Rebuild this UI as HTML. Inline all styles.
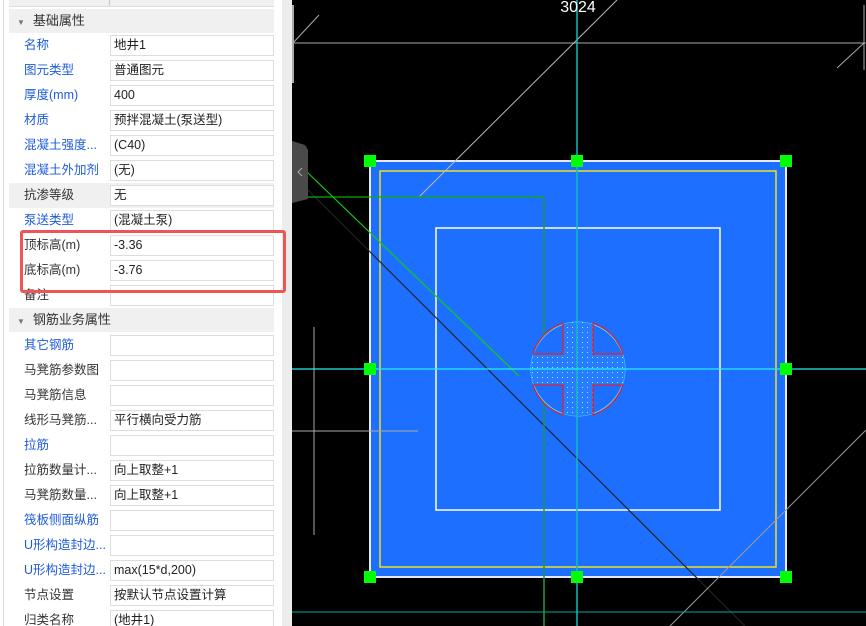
<!DOCTYPE html>
<html><head><meta charset="utf-8"><style>
html,body{margin:0;width:866px;height:626px;overflow:hidden}
body{background:#000;font-family:"Liberation Sans","Noto Sans CJK SC",sans-serif;font-size:12px;position:relative}
#p{position:absolute;left:0;top:0;width:282px;height:626px;background:#fff}
#strip{position:absolute;left:282px;top:0;width:10px;height:626px;background:#ececec}
.lb{position:absolute;left:3px;top:0;width:1px;height:626px;background:#ddd}
.hd{position:absolute;left:9px;width:265px;height:24px;background:#f0f0f0;color:#333;font-size:13px;line-height:24px}
.hd span{font-size:8px;color:#777;margin:0 8px 0 8px}
.r{position:absolute;left:9px;width:265px;height:25px}
.r .l{position:absolute;left:15px;top:0;line-height:25px;color:#333;font-size:12.5px;white-space:nowrap}
.r .l.b{color:#1e5bdc}
.r .v{position:absolute;left:101px;top:2px;border:1px solid #ddd;line-height:19px;padding-left:3px;box-sizing:border-box;width:164px;height:21px;color:#222;font-size:12.5px}
.g{background:#f0f0f0}
#red{position:absolute;left:20px;top:230px;width:260px;height:57px;border:3px solid #f05454;border-radius:3px}
</style></head><body>
<div id="p">
<div class="lb"></div>
<div style="position:absolute;left:9px;top:0;width:265px;height:6px;background:#f0f0f0;border-bottom:1px solid #ddd"></div>
<div style="position:absolute;left:109px;top:0;width:1px;height:6px;background:#ccc"></div>
<div class="hd" style="top:9px"><span>▼</span>基础属性</div>
<div class="r" style="top:33px"><div class="l b">名称</div><div class="v">地井1</div></div>
<div class="r" style="top:58px"><div class="l b">图元类型</div><div class="v">普通图元</div></div>
<div class="r" style="top:83px"><div class="l b">厚度(mm)</div><div class="v">400</div></div>
<div class="r" style="top:108px"><div class="l b">材质</div><div class="v">预拌混凝土(泵送型)</div></div>
<div class="r" style="top:133px"><div class="l b">混凝土强度...</div><div class="v">(C40)</div></div>
<div class="r" style="top:158px"><div class="l b">混凝土外加剂</div><div class="v">(无)</div></div>
<div class="r g" style="top:183px"><div class="l">抗渗等级</div><div class="v" style="background:#fff">无</div></div>
<div class="r" style="top:208px"><div class="l b">泵送类型</div><div class="v">(混凝土泵)</div></div>
<div class="r" style="top:233px"><div class="l">顶标高(m)</div><div class="v">-3.36</div></div>
<div class="r" style="top:258px"><div class="l">底标高(m)</div><div class="v">-3.76</div></div>
<div class="r" style="top:283px"><div class="l">备注</div><div class="v"></div></div>
<div class="hd" style="top:308px"><span>▼</span>钢筋业务属性</div>
<div class="r" style="top:333px"><div class="l b">其它钢筋</div><div class="v"></div></div>
<div class="r" style="top:358px"><div class="l">马凳筋参数图</div><div class="v"></div></div>
<div class="r" style="top:383px"><div class="l">马凳筋信息</div><div class="v"></div></div>
<div class="r" style="top:408px"><div class="l">线形马凳筋...</div><div class="v">平行横向受力筋</div></div>
<div class="r" style="top:433px"><div class="l b">拉筋</div><div class="v"></div></div>
<div class="r" style="top:458px"><div class="l">拉筋数量计...</div><div class="v">向上取整+1</div></div>
<div class="r" style="top:483px"><div class="l">马凳筋数量...</div><div class="v">向上取整+1</div></div>
<div class="r" style="top:508px"><div class="l b">筏板侧面纵筋</div><div class="v"></div></div>
<div class="r" style="top:533px"><div class="l b">U形构造封边...</div><div class="v"></div></div>
<div class="r" style="top:558px"><div class="l b">U形构造封边...</div><div class="v">max(15*d,200)</div></div>
<div class="r" style="top:583px"><div class="l">节点设置</div><div class="v">按默认节点设置计算</div></div>
<div class="r" style="top:608px"><div class="l">归类名称</div><div class="v">(地井1)</div></div>
</div>
<div id="strip"></div>
<div id="red"></div>
<svg style="position:absolute;left:0;top:0" width="866" height="626">
<rect x="370" y="161" width="416" height="416" fill="#1c6fff" stroke="#e8e8ff" stroke-width="2"/>
<rect x="380" y="171" width="396" height="396" fill="none" stroke="#f0e020" stroke-width="1.5"/>
<rect x="436" y="228" width="284" height="282" fill="none" stroke="#fff" stroke-width="1.5"/>
<line x1="293" y1="43" x2="866" y2="43" stroke="#aaa"/>
<line x1="293" y1="5" x2="293" y2="83" stroke="#aaa" stroke-width="2"/>
<line x1="864" y1="5" x2="864" y2="70" stroke="#aaa"/>
<line x1="293" y1="43" x2="319" y2="15" stroke="#aaa"/>
<line x1="864" y1="43" x2="837" y2="68" stroke="#aaa"/>
<line x1="617" y1="0" x2="420" y2="196" stroke="#bbb"/>
<line x1="303" y1="185" x2="745" y2="626" stroke="#222" stroke-width="1.2"/>
<line x1="866" y1="430" x2="670" y2="626" stroke="#999"/>
<line x1="314" y1="327" x2="314" y2="535" stroke="#aaa"/>
<line x1="292" y1="431" x2="418" y2="431" stroke="#aaa"/>
<line x1="292" y1="612" x2="866" y2="612" stroke="#0aa" />
<line x1="305" y1="197" x2="544" y2="197" stroke="#1a1" stroke-width="1.2"/>
<line x1="544" y1="197" x2="544" y2="626" stroke="#1a9a40" stroke-width="1.5"/>
<line x1="307" y1="172" x2="519" y2="376" stroke="#1c1" stroke-width="1.2"/>
<defs><pattern id="dt" width="5" height="5" patternUnits="userSpaceOnUse"><rect width="5" height="5" fill="#2a7cff"/><rect x="2" y="2" width="1" height="1" fill="#7ff"/></pattern>
<clipPath id="c"><circle cx="578" cy="369" r="47"/></clipPath></defs>
<circle cx="578" cy="369" r="47" fill="#1c6fff" stroke="#40e0ff"/>
<g clip-path="url(#c)"><rect x="563" y="320" width="30" height="100" fill="url(#dt)"/><rect x="528" y="354" width="100" height="31" fill="url(#dt)"/></g>
<path d="M563 323 L563 354 L533 354 M593 323 L593 354 L623 354 M563 415 L563 385 L533 385 M593 415 L593 385 L623 385" fill="none" stroke="#e02030" stroke-width="1.3"/>
<path d="M533 354 A47 47 0 0 1 563 323 M593 323 A47 47 0 0 1 623 354 M623 385 A47 47 0 0 1 593 415 M563 415 A47 47 0 0 1 533 385" fill="none" stroke="#e02030" stroke-width="1.3"/>
<line x1="577" y1="0" x2="577" y2="626" stroke="#1bb" stroke-width="1.5"/>
<line x1="292" y1="369" x2="866" y2="369" stroke="#2ee" stroke-width="1.2"/>
<g fill="#00ff00">
<rect x="364" y="155" width="12" height="12"/><rect x="571" y="155" width="12" height="12"/><rect x="780" y="155" width="12" height="12"/>
<rect x="364" y="363" width="12" height="12"/><rect x="780" y="363" width="12" height="12"/>
<rect x="364" y="571" width="12" height="12"/><rect x="571" y="571" width="12" height="12"/><rect x="780" y="571" width="12" height="12"/>
</g>
<path d="M292 141 L305 145 L308 150 L308 199 L292 203 Z" fill="#4a4a4a"/>
<path d="M302 168 L298 172 L302 176" fill="none" stroke="#aaa"/>
<text x="578" y="12" fill="#fff" font-size="16" text-anchor="middle" font-family="Liberation Sans,sans-serif">3024</text>
</svg>
</body></html>
